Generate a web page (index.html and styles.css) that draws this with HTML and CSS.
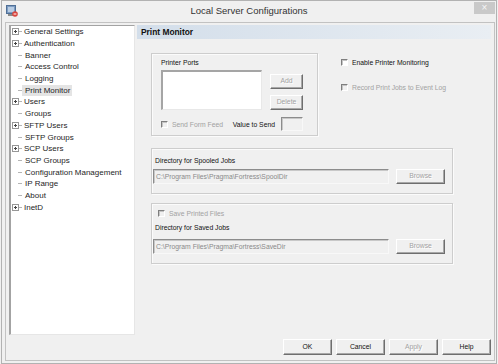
FILE: index.html
```html
<!DOCTYPE html>
<html>
<head>
<meta charset="utf-8">
<link rel="stylesheet" href="styles.css">
</head>
<body>
<div class="window">
  <div class="frame">
    <div class="titlebar">
      <svg class="appicon" width="12" height="12" viewBox="0 0 12 12">
        <rect x="0.5" y="0.5" width="9" height="8" fill="#7d9cc2" stroke="#4f6f96"/>
        <rect x="2" y="2" width="6" height="5" fill="#b9cde4"/>
        <rect x="2" y="9" width="6" height="2" fill="#8a8a8a"/>
        <circle cx="9" cy="9" r="2.8" fill="#d9453d"/>
        <rect x="7.6" y="8.5" width="2.8" height="1" fill="#fff"/>
      </svg>
      <div class="title">Local Server Configurations</div>
      <div class="closewrap"><div class="close">×</div></div>
    </div>
    <div class="client">
      <div class="body">
        <ul class="tree">
          <li class="node"><span class="exp"></span><span class="cn"></span><span class="t">General Settings</span></li>
          <li class="node"><span class="exp"></span><span class="cn"></span><span class="t">Authentication</span></li>
          <li class="leaf"><span class="ln"></span><span class="t">Banner</span></li>
          <li class="leaf"><span class="ln"></span><span class="t">Access Control</span></li>
          <li class="leaf"><span class="ln"></span><span class="t">Logging</span></li>
          <li class="leaf sel"><span class="ln"></span><span class="t">Print Monitor</span></li>
          <li class="node"><span class="exp"></span><span class="cn"></span><span class="t">Users</span></li>
          <li class="leaf"><span class="ln"></span><span class="t">Groups</span></li>
          <li class="node"><span class="exp"></span><span class="cn"></span><span class="t">SFTP Users</span></li>
          <li class="leaf"><span class="ln"></span><span class="t">SFTP Groups</span></li>
          <li class="node"><span class="exp"></span><span class="cn"></span><span class="t">SCP Users</span></li>
          <li class="leaf"><span class="ln"></span><span class="t">SCP Groups</span></li>
          <li class="leaf"><span class="ln"></span><span class="t">Configuration Management</span></li>
          <li class="leaf"><span class="ln"></span><span class="t">IP Range</span></li>
          <li class="leaf"><span class="ln"></span><span class="t">About</span></li>
          <li class="node"><span class="exp"></span><span class="cn"></span><span class="t">InetD</span></li>
        </ul>
        <div class="main">
          <div class="header">Print Monitor</div>
          <div class="pane">
            <div class="toprow">
              <div class="group ports">
                <div class="lbl">Printer Ports</div>
                <div class="portsrow">
                  <div class="listbox"></div>
                  <div class="btncol">
                    <div class="btn dis">Add</div>
                    <div class="btn dis">Delete</div>
                  </div>
                </div>
                <div class="ffrow">
                  <div class="chk dis"><span class="box"></span><span>Send Form Feed</span></div>
                  <span class="vts">Value to Send</span>
                  <span class="valbox"></span>
                </div>
              </div>
              <div class="checks">
                <div class="chk"><span class="box on"></span><span>Enable Printer Monitoring</span></div>
                <div class="chk dis"><span class="box"></span><span>Record Print Jobs to Event Log</span></div>
              </div>
            </div>
            <div class="group dir spool">
              <div class="lbl">Directory for Spooled Jobs</div>
              <div class="fieldrow">
                <div class="field">C:\Program Files\Pragma\Fortress\SpoolDir</div>
                <div class="btn dis browse">Browse</div>
              </div>
            </div>
            <div class="group dir saved">
              <div class="chk dis savechk"><span class="box"></span><span>Save Printed Files</span></div>
              <div class="lbl">Directory for Saved Jobs</div>
              <div class="fieldrow">
                <div class="field">C:\Program Files\Pragma\Fortress\SaveDir</div>
                <div class="btn dis browse">Browse</div>
              </div>
            </div>
          </div>
        </div>
      </div>
      <div class="buttons">
        <div class="btn big">OK</div>
        <div class="btn big">Cancel</div>
        <div class="btn big dis">Apply</div>
        <div class="btn big">Help</div>
      </div>
    </div>
  </div>
</div>
</body>
</html>
```
FILE: styles.css
```css
* { box-sizing: border-box; margin: 0; padding: 0; }
html, body { width: 498px; height: 364px; overflow: hidden; background: #f0f0f0; }
body { font-family: "Liberation Sans", Arial, sans-serif; color: #111; }

.window { width: 498px; height: 364px; padding: 0 1px; }
.frame {
  height: 364px;
  border: 1px solid #b2b2b2;
  display: flex;
  flex-direction: column;
  background: #f0f0f0;
}

.titlebar {
  height: 21px;
  flex: none;
  display: grid;
  grid-template-columns: 1fr auto 1fr;
  align-items: start;
}
.appicon { margin: 4px 0 0 4px; }
.title {
  font-size: 9.5px;
  line-height: 18px;
  color: #333;
  padding-top: 1px;
}
.closewrap { display: flex; justify-content: flex-end; padding: 1px 1px 0 0; }
.close {
  width: 21px;
  height: 12px;
  background: #c9c9c9;
  color: #f6f6f6;
  font-size: 10px;
  line-height: 12px;
  text-align: center;
}

.client {
  flex: 1;
  margin: 0 1px 2px 3px;
  border: 1px solid #c2c2c2;
  padding: 2px 3px 0 3px;
  display: flex;
  flex-direction: column;
}
.body { display: flex; height: 310px; flex: none; }

.tree {
  list-style: none;
  width: 126px;
  flex: none;
  background: #fff;
  border-left: 2px solid #a3a3a3;
  border-top: 1px solid #a3a3a3;
  border-right: 1px solid #e6e6e6;
  border-bottom: 1px solid #e6e6e6;
  font-size: 8px;
  color: #1e1e1e;
}
.tree li { display: flex; align-items: center; height: 11.7px; }
.exp {
  width: 7px; height: 7px;
  margin-left: 1px;
  border: 1px solid #979797;
  background:
    linear-gradient(#444, #444) center / 3px 1px no-repeat,
    linear-gradient(#444, #444) center / 1px 3px no-repeat,
    #fff;
  flex: none;
}
.cn { width: 3px; border-top: 1px solid #b4b4b4; flex: none; }
.ln { width: 4px; margin-left: 7px; border-top: 1px solid #b4b4b4; flex: none; }
.t { padding: 0 2px; line-height: 11px; white-space: nowrap; }
.leaf .t { padding-left: 3px; }
.sel .t { background: #e4e4e4; }

.main { flex: 1; margin-left: 2px; display: flex; flex-direction: column; }
.header {
  height: 14px;
  line-height: 14px;
  padding-left: 4px;
  font-size: 8.4px;
  font-weight: bold;
  color: #111;
  background: linear-gradient(to right, #d3deea, #e9eef3);
}
.pane { padding: 14px 0 0 14px; font-size: 6.8px; }

.toprow { display: flex; align-items: flex-start; }
.group {
  border: 1px solid #cdcdcd;
  box-shadow: inset 1px 1px 0 #fbfbfb, 1px 1px 0 #fbfbfb;
}
.ports { width: 167px; height: 83px; padding: 4px 14px 0 9px; }
.lbl { line-height: 9px; height: 9px; white-space: nowrap; }
.portsrow { display: flex; margin-top: 3px; }
.listbox {
  width: 101px; height: 40px;
  background: #fff;
  border-top: 2px solid #a5a5a5;
  border-left: 2px solid #a5a5a5;
  border-right: 1px solid #e8e8e8;
  border-bottom: 1px solid #e8e8e8;
}
.btncol { margin-left: 8px; padding-top: 4px; display: flex; flex-direction: column; gap: 6px; }

.btn {
  height: 15px;
  width: 33px;
  border: 1px solid;
  border-color: #fff #6e6e6e #6e6e6e #fff;
  box-shadow: inset -1px -1px 0 #a8a8a8;
  background: #f0f0f0;
  text-align: center;
  line-height: 12px;
  color: #111;
  white-space: nowrap;
}
.btn.dis { color: #a2a2a2; text-shadow: 1px 1px 0 #fff; }

.ffrow { display: flex; align-items: center; height: 14px; margin-top: 7px; }
.chk { display: flex; align-items: center; gap: 4px; height: 9px; white-space: nowrap; }
.chk.dis { color: #a2a2a2; }
.box {
  width: 7px; height: 7px; flex: none;
  border: 1px solid;
  border-color: #7e7e7e #ffffff #ffffff #7e7e7e;
  box-shadow: inset 1px 1px 0 #c4c4c4;
  background: #f0f0f0;
}
.box.on { background: #fff; }
.vts { margin-left: auto; margin-right: 6px; }
.valbox {
  width: 22px; height: 14px;
  border: 1px solid;
  border-color: #8c8c8c #f8f8f8 #f8f8f8 #8c8c8c;
  box-shadow: inset 1px 1px 0 #c8c8c8;
  background: #f0f0f0;
}

.checks { margin-left: 23px; padding-top: 5px; display: flex; flex-direction: column; gap: 16px; }

.dir { width: 302px; }
.spool { margin-top: 12px; height: 46px; padding: 7px 0 0 1px; }
.spool .lbl, .saved .lbl { margin-left: 2px; }
.fieldrow { display: flex; margin-top: 4px; }
.field {
  width: 236px; height: 15px;
  border: 1px solid;
  border-color: #8c8c8c #f8f8f8 #f8f8f8 #8c8c8c;
  box-shadow: inset 1px 1px 0 #c8c8c8;
  background: #f0f0f0;
  color: #8a8a8a;
  line-height: 13px;
  padding-left: 2px;
  white-space: nowrap;
}
.btn.browse { width: 49px; margin-left: 7px; }

.saved { margin-top: 9px; height: 61px; padding: 5px 0 0 1px; }
.savechk { margin-left: 5px; }
.saved .lbl { margin-top: 5px; }
.saved .fieldrow { margin-top: 7px; }

.buttons {
  margin-top: 4px;
  display: flex;
  justify-content: flex-end;
  gap: 4px;
  font-size: 6.8px;
}
.btn.big { width: 49px; height: 16px; line-height: 13px; }
```
